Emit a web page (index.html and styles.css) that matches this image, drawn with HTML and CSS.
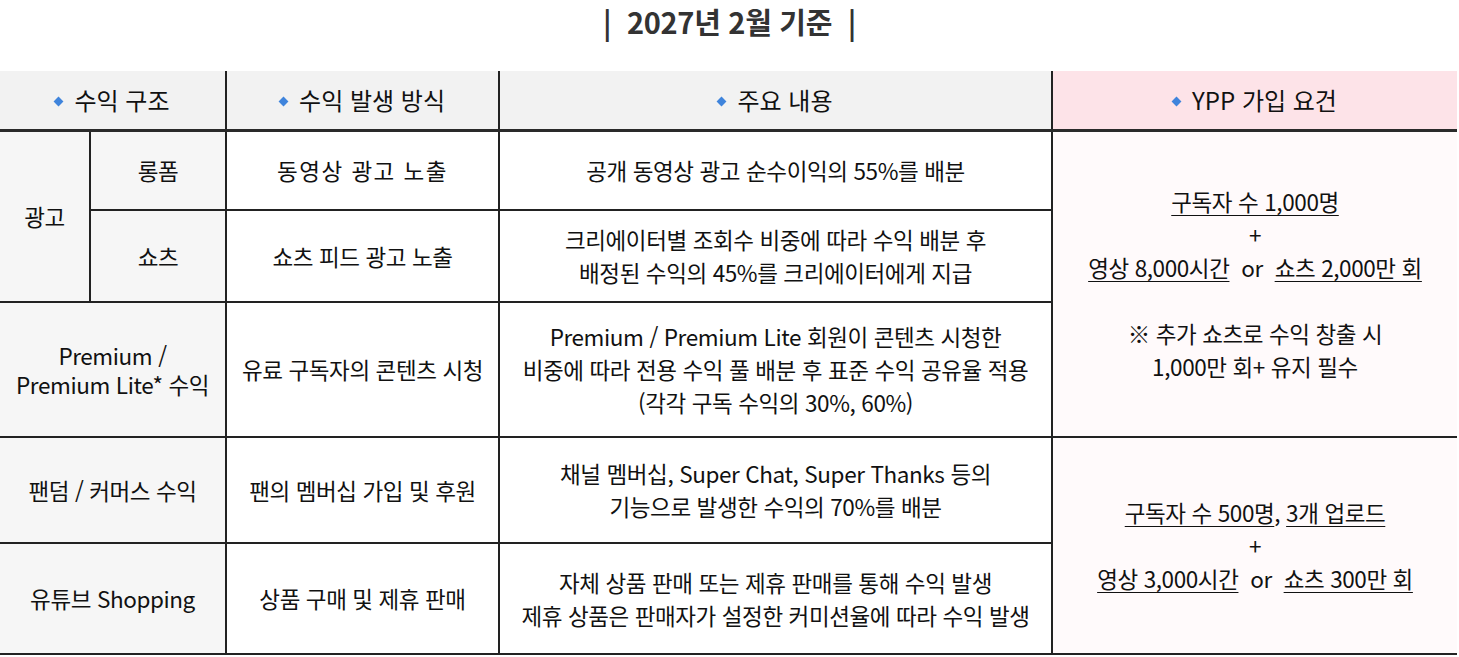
FILE: index.html
```html
<!DOCTYPE html>
<html lang="ko">
<head>
<meta charset="utf-8">
<link rel="stylesheet" href="styles.css">
</head>
<body>
<div class="page">
  <h1 class="title">|&nbsp;&nbsp;2027년 2월 기준&nbsp;&nbsp;|</h1>
  <table class="rev">
    <colgroup>
      <col class="c1"><col class="c2"><col class="c3"><col class="c4"><col class="c5">
    </colgroup>
    <thead>
      <tr class="r-head">
        <th colspan="2"><span class="dia"></span>수익 구조</th>
        <th><span class="dia"></span>수익 발생 방식</th>
        <th><span class="dia"></span>주요 내용</th>
        <th class="pink-head"><span class="dia"></span>YPP 가입 요건</th>
      </tr>
    </thead>
    <tbody>
      <tr class="r1">
        <td rowspan="2" class="side">광고</td>
        <td class="side">롱폼</td>
        <td class="wide">동영상 광고 노출</td>
        <td>공개 동영상 광고 순수이익의 55%를 배분</td>
        <td rowspan="3" class="ypp">
          <span class="u">구독자 수 1,000명</span><br>
          +<br>
          <span class="u">영상 8,000시간</span>&nbsp; or &nbsp;<span class="u">쇼츠 2,000만 회</span><br>
          <br>
          ※ 추가 쇼츠로 수익 창출 시<br>
          1,000만 회+ 유지 필수
        </td>
      </tr>
      <tr class="r2">
        <td class="side">쇼츠</td>
        <td>쇼츠 피드 광고 노출</td>
        <td>크리에이터별 조회수 비중에 따라 수익 배분 후<br>배정된 수익의 45%를 크리에이터에게 지급</td>
      </tr>
      <tr class="r3">
        <td colspan="2" class="side tight">Premium /<br>Premium Lite* 수익</td>
        <td>유료 구독자의 콘텐츠 시청</td>
        <td>Premium / Premium Lite 회원이 콘텐츠 시청한<br>비중에 따라 전용 수익 풀 배분 후 표준 수익 공유율 적용<br>(각각 구독 수익의 30%, 60%)</td>
      </tr>
      <tr class="r4">
        <td colspan="2" class="side">팬덤 / 커머스 수익</td>
        <td>팬의 멤버십 가입 및 후원</td>
        <td>채널 멤버십, Super Chat, Super Thanks 등의<br>기능으로 발생한 수익의 70%를 배분</td>
        <td rowspan="2" class="ypp">
          <span class="u">구독자 수 500명</span>, <span class="u">3개 업로드</span><br>
          +<br>
          <span class="u">영상 3,000시간</span>&nbsp; or &nbsp;<span class="u">쇼츠 300만 회</span>
        </td>
      </tr>
      <tr class="r5">
        <td colspan="2" class="side">유튜브 Shopping</td>
        <td>상품 구매 및 제휴 판매</td>
        <td>자체 상품 판매 또는 제휴 판매를 통해 수익 발생<br>제휴 상품은 판매자가 설정한 커미션율에 따라 수익 발생</td>
      </tr>
    </tbody>
  </table>
</div>
</body>
</html>
```

FILE: styles.css
```css
* { box-sizing: border-box; }
html, body {
  margin: 0;
  padding: 0;
  background: #ffffff;
}
body {
  font-family: "Noto Sans CJK KR", "Noto Sans", sans-serif;
  color: #111111;
}
.page {
  width: 1459px;
}
.title {
  margin: 0;
  height: 71px;
  padding-top: 0;
  text-align: center;
  font-size: 29px;
  line-height: 42px;
  font-weight: 700;
  color: #333333;
  letter-spacing: -0.3px;
}
.rev {
  width: 1457px;
  border-collapse: collapse;
  table-layout: fixed;
  border-bottom: 2px solid #222;
}
.c1 { width: 90px; }
.c2 { width: 136px; }
.c3 { width: 273px; }
.c4 { width: 553px; }
.c5 { width: 405px; }

.rev th, .rev td {
  border: 2px solid #222;
  text-align: center;
  vertical-align: middle;
  padding: 0;
}
.rev tr > :first-child { border-left: none; }
.rev tr > :last-child { border-right: none; }
.rev thead th { border-top: none; }

.rev th {
  background: #f2f2f2;
  font-size: 24px;
  font-weight: 400;
  line-height: 30px;
  color: #111;
  border-bottom: 3px solid #2a2a2a;
}
.rev th.pink-head {
  background: #fde3e8;
}
.dia {
  display: inline-block;
  width: 7px;
  height: 7px;
  background: #3f84dc;
  transform: rotate(45deg);
  margin-right: 12px;
  vertical-align: 5px;
}
.rev td {
  font-size: 22.5px;
  line-height: 33px;
  letter-spacing: -0.4px;
  background: #ffffff;
}
.rev td.side {
  background: #f6f6f6;
}
.rev td.tight {
  line-height: 29px;
}
.rev td.ypp {
  background: #fffafb;
}
.rev td.wide { letter-spacing: 1.5px; }
.u {
  text-decoration: underline;
  text-decoration-thickness: 1px;
  text-underline-offset: 4px;
}
.r-head { height: 59px; }
.r1 { height: 80px; }
.r2 { height: 92px; }
.r3 { height: 135px; }
.r4 { height: 106px; }
.r5 { height: 111px; }
```
